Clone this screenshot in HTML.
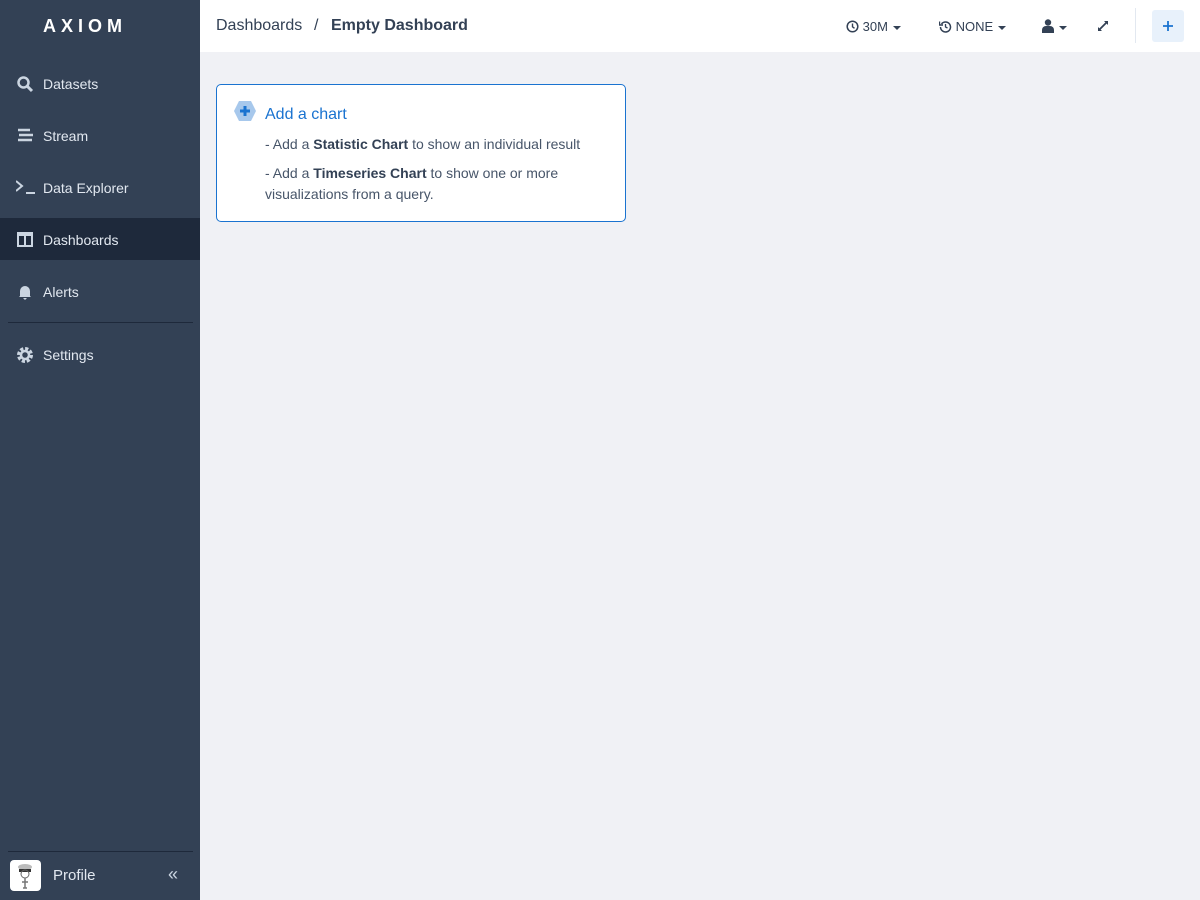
<!DOCTYPE html>
<html><head><style>
*{margin:0;padding:0;box-sizing:border-box}
body{width:1200px;height:900px;font-family:"Liberation Sans",sans-serif;background:#f0f1f5;position:relative;overflow:hidden}
.sb{position:absolute;left:0;top:0;width:200px;height:900px;background:#334155}
.logo{position:absolute;left:43px;top:16px;color:#fff;font-size:18px;font-weight:bold;letter-spacing:5px}
.item{position:absolute;left:0;width:200px;height:42px;color:#e2e8f0;font-size:14px;line-height:44px;padding-left:43px}
.item svg{position:absolute;left:16px;top:13px}
.act{background:#1e293b}
.hr{position:absolute;left:8px;width:185px;height:1px;background:#1e293b}
.top{position:absolute;left:200px;top:0;width:1000px;height:52px;background:#fff}
.card{position:absolute;left:216px;top:84px;width:410px;height:138px;background:#fff;border:1px solid #1a73d0;border-radius:5px}
.t{position:absolute;font-size:14px;color:#475569}
b{color:#334155}
.h{position:absolute;top:19px;font-size:13px;color:#334155;line-height:15px}
.h svg{vertical-align:-2px}
</style></head><body>
<div class="sb">
<div class="logo">AXIOM</div>
<div class="item" style="top:62px"><svg width="18" height="18" viewBox="0 0 18 18"><circle cx="7.5" cy="7.5" r="5" fill="none" stroke="#cbd5e1" stroke-width="2.5"/><path d="M11 11l5 5" stroke="#cbd5e1" stroke-width="3"/></svg>Datasets</div>
<div class="item" style="top:114px"><svg width="18" height="18" viewBox="0 0 18 18"><path d="M2 3h12M3 8h14M2 13h14" stroke="#cbd5e1" stroke-width="2.5"/></svg>Stream</div>
<div class="item" style="top:166px"><svg width="22" height="18" viewBox="0 0 22 18"><path d="M0 2l6 5-6 5" fill="none" stroke="#cbd5e1" stroke-width="2"/><path d="M10 14h9" stroke="#cbd5e1" stroke-width="2"/></svg>Data Explorer</div>
<div class="item act" style="top:218px"><svg width="18" height="18" viewBox="0 0 18 18"><rect x="2" y="2" width="14" height="13" fill="none" stroke="#cbd5e1" stroke-width="2"/><path d="M2 4h14M9 4v11" stroke="#cbd5e1" stroke-width="2"/></svg>Dashboards</div>
<div class="item" style="top:270px"><svg width="18" height="18" viewBox="0 0 18 18"><path d="M4 13V8a5 5 0 0110 0v5l1 1H3z M7 15h4l-2 2z" fill="#cbd5e1"/></svg>Alerts</div>
<div class="hr" style="top:322px"></div>
<div class="item" style="top:333px"><svg width="18" height="18" viewBox="0 0 18 18"><circle cx="9" cy="9" r="6" fill="none" stroke="#cbd5e1" stroke-width="4" stroke-dasharray="3 1.7"/><circle cx="9" cy="9" r="4" fill="none" stroke="#cbd5e1" stroke-width="2.5"/></svg>Settings</div>
<div class="hr" style="top:851px"></div>
<div style="position:absolute;left:10px;top:860px;width:31px;height:31px;background:#fff;border-radius:4px">
<svg width="31" height="31" viewBox="0 0 31 31"><ellipse cx="15" cy="7" rx="7" ry="3" fill="#bbb"/><rect x="9" y="9" width="12" height="3" fill="#333"/><circle cx="15" cy="14" r="4" fill="none" stroke="#666"/><path d="M15 18v10M12 22h6M13 28h4" stroke="#777" stroke-width="1.5"/></svg></div>
<div style="position:absolute;left:53px;top:867px;color:#e2e8f0;font-size:15px">Profile</div>
<div style="position:absolute;left:168px;top:864px;color:#cbd5e1;font-size:18px">«</div>
</div>
<div class="top">
<div style="position:absolute;left:16px;top:17px;font-size:16px;color:#334155">Dashboards</div>
<div style="position:absolute;left:114px;top:17px;font-size:16px;color:#334155">/</div>
<div style="position:absolute;left:131px;top:17px;font-size:16px;color:#334155;font-weight:bold">Empty Dashboard</div>
<div class="h" style="left:646px"><svg width="13" height="13" viewBox="0 0 13 13"><circle cx="6.5" cy="6.5" r="5.3" fill="none" stroke="#334155" stroke-width="1.5"/><path d="M6.5 3.5v3.3l2 1.5" fill="none" stroke="#334155" stroke-width="1.4"/></svg> 30M <svg width="10" height="10" viewBox="0 0 10 10"><path d="M1 3h8L5 7z" fill="#334155"/></svg></div>
<div class="h" style="left:739px"><svg width="13" height="13" viewBox="0 0 13 13"><path d="M2.5 4A5 5 0 1 1 1.5 7" fill="none" stroke="#334155" stroke-width="1.5"/><path d="M0.5 1.5v3.5h3.5" fill="none" stroke="#334155" stroke-width="1.4"/><path d="M6.5 4v3l2 1" fill="none" stroke="#334155" stroke-width="1.3"/></svg> NONE <svg width="10" height="10" viewBox="0 0 10 10"><path d="M1 3h8L5 7z" fill="#334155"/></svg></div>
<div class="h" style="left:842px"><svg width="12" height="14" viewBox="0 0 12 14"><circle cx="6" cy="3.5" r="3.2" fill="#334155"/><path d="M0 14v-3a4 4 0 0 1 4-4h4a4 4 0 0 1 4 4v3z" fill="#334155"/></svg> <svg width="10" height="10" viewBox="0 0 10 10"><path d="M1 3h8L5 7z" fill="#334155"/></svg></div>
<div class="h" style="left:896px"><svg width="14" height="14" viewBox="0 0 14 14"><path d="M3 11l8-8" stroke="#334155" stroke-width="1.8"/><path d="M8 2h4v4zM2 8v4h4z" fill="#334155"/></svg></div>
<div style="position:absolute;left:935px;top:8px;width:1px;height:35px;background:#e2e8f0"></div>
<div style="position:absolute;left:952px;top:10px;width:32px;height:32px;background:#e8f1fb;border-radius:3px"><svg width="32" height="32" viewBox="0 0 32 32"><path d="M16 11v10M11 16h10" stroke="#1a73d0" stroke-width="1.8"/></svg></div>
</div>
<div class="card">
<svg style="position:absolute;left:17px;top:16px" width="22" height="20" viewBox="0 0 22 20"><path d="M5 0h12l5 10-5 10H5L0 10z" fill="#a7c8ec"/><path d="M11 5v10M6 10h10" stroke="#1a73d0" stroke-width="3"/></svg>
<div style="position:absolute;left:48px;top:21px;color:#1a73d0;font-size:16px">Add a chart</div>
<div class="t" style="left:48px;top:51px">- Add a <b>Statistic Chart</b> to show an individual result</div>
<div class="t" style="left:48px;top:78px;line-height:21px;width:340px">- Add a <b>Timeseries Chart</b> to show one or more visualizations from a query.</div>
</div>
</body></html>
